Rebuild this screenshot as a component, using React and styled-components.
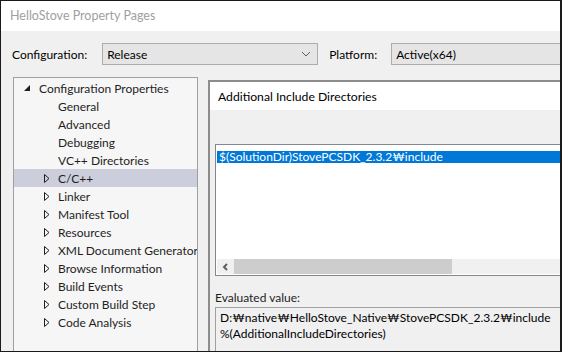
import React from 'react';
import styled, { createGlobalStyle } from 'styled-components';

const GlobalStyle = createGlobalStyle`
  html, body {
    margin: 0;
    padding: 0;
    background: #f0f0f0;
  }
  body {
    font-family: Lato, "Noto Sans CJK KR", sans-serif;
    font-size: 12px;
    color: #000;
  }
`;

const treeItems = [
  { label: 'General' },
  { label: 'Advanced' },
  { label: 'Debugging' },
  { label: 'VC++ Directories' },
  { label: 'C/C++', expandable: true, selected: true },
  { label: 'Linker', expandable: true },
  { label: 'Manifest Tool', expandable: true },
  { label: 'Resources', expandable: true },
  { label: 'XML Document Generator', expandable: true },
  { label: 'Browse Information', expandable: true },
  { label: 'Build Events', expandable: true },
  { label: 'Custom Build Step', expandable: true },
  { label: 'Code Analysis', expandable: true },
];

const ExpandedArrow = () => (
  <svg width="7" height="7" viewBox="0 0 7 7">
    <polygon points="6,0 6,6 0,6" fill="#1e1e1e" />
  </svg>
);

const CollapsedArrow = () => (
  <svg width="6" height="9" viewBox="0 0 6 9">
    <polygon points="0.5,0.5 5,4.5 0.5,8.5" fill="none" stroke="#1e1e1e" strokeWidth="1" />
  </svg>
);

const Chevron = () => (
  <svg width="10" height="6" viewBox="0 0 10 6">
    <polyline points="1,1 5,5 9,1" fill="none" stroke="#606060" strokeWidth="1" />
  </svg>
);

const LeftArrow = () => (
  <svg width="7" height="8" viewBox="0 0 7 8">
    <polyline points="5,1 2,4 5,7" fill="none" stroke="#606060" strokeWidth="2" />
  </svg>
);

const App = () => {
  return (
    <Window>
      <GlobalStyle />
      <TitleBar>HelloStove Property Pages</TitleBar>
      <Body>
        <ConfigRow>
          <FieldLabel before="0" after="15px">Configuration:</FieldLabel>
          <Combo width="216px">
            <span>Release</span>
            <Chevron />
          </Combo>
          <FieldLabel before="11px" after="14px">Platform:</FieldLabel>
          <Combo width="200px">
            <span>Active(x64)</span>
          </Combo>
        </ConfigRow>

        <Main>
          <Tree>
            <TreeRow indent="10px">
              <ArrowSlot width="15px"><ExpandedArrow /></ArrowSlot>
              Configuration Properties
            </TreeRow>
            {treeItems.map(item => (
              <TreeRow key={item.label} indent="30px" selected={item.selected}>
                <ArrowSlot width="14px">{item.expandable && <CollapsedArrow />}</ArrowSlot>
                {item.label}
              </TreeRow>
            ))}
          </Tree>

          <Editor>
            <EditorHeader>Additional Include Directories</EditorHeader>
            <EditorBody>
              <ListBox>
                <ListItem>$(SolutionDir)StovePCSDK_2.3.2₩include</ListItem>
                <ListSpacer />
                <HScroll>
                  <ScrollArrow><LeftArrow /></ScrollArrow>
                  <ScrollThumb />
                </HScroll>
              </ListBox>
              <SectionLabel>Evaluated value:</SectionLabel>
              <ValueBox>
                <div>D:₩native₩HelloStove_Native₩StovePCSDK_2.3.2₩include</div>
                <div>%(AdditionalIncludeDirectories)</div>
              </ValueBox>
            </EditorBody>
          </Editor>
        </Main>
      </Body>
    </Window>
  );
};

const Window = styled.div`
  width: 562px;
  height: 352px;
  box-sizing: border-box;
  border: 1px solid #1a1a1a;
  border-right-width: 2px;
  display: flex;
  flex-direction: column;
  overflow: hidden;
  background: #f0f0f0;
`;

const TitleBar = styled.div`
  height: 30px;
  flex-shrink: 0;
  background: #fff;
  color: #a0a0a0;
  font-size: 12.5px;
  line-height: 30px;
  padding-left: 9px;
`;

const Body = styled.div`
  flex: 1;
  display: flex;
  flex-direction: column;
  overflow: hidden;
`;

const ConfigRow = styled.div`
  display: flex;
  align-items: center;
  flex-shrink: 0;
  height: 22px;
  margin-top: 12px;
  padding-left: 11px;
`;

const FieldLabel = styled.div`
  flex-shrink: 0;
  font-size: 12px;
  margin-left: ${props => props.before};
  margin-right: ${props => props.after};
`;

const Combo = styled.div`
  width: ${props => props.width};
  height: 22px;
  box-sizing: border-box;
  flex-shrink: 0;
  display: flex;
  align-items: center;
  justify-content: space-between;
  padding: 0 6px 0 4px;
  background: #e5e5e5;
  border: 1px solid #adadad;
  font-size: 12px;
`;

const Main = styled.div`
  flex: 1;
  display: flex;
  margin-top: 12px;
  padding-left: 12px;
  overflow: hidden;
`;

const Tree = styled.div`
  width: 185px;
  flex-shrink: 0;
  box-sizing: border-box;
  border: 1px solid #a0a0a0;
  border-bottom: none;
  background: #f6f6f6;
  padding-top: 1px;
`;

const TreeRow = styled.div`
  height: 18px;
  display: flex;
  align-items: center;
  padding-left: ${props => props.indent};
  background: ${props => (props.selected ? '#cccedb' : 'transparent')};
  color: #1e1e1e;
  white-space: nowrap;
  overflow: hidden;
`;

const ArrowSlot = styled.span`
  width: ${props => props.width};
  flex-shrink: 0;
  display: flex;
  align-items: center;
`;

const Editor = styled.div`
  width: 360px;
  flex-shrink: 0;
  margin-left: 10px;
  margin-top: 3px;
  border-top: 2px solid #8c8c8c;
  border-left: 2px solid #8c8c8c;
  display: flex;
  flex-direction: column;
`;

const EditorHeader = styled.div`
  height: 28px;
  flex-shrink: 0;
  background: #fff;
  display: flex;
  align-items: center;
  padding-left: 8px;
  font-size: 12.2px;
`;

const EditorBody = styled.div`
  flex: 1;
  padding: 34px 0 0 5px;
  background: #f0f0f0;
`;

const ListBox = styled.div`
  height: 132px;
  box-sizing: border-box;
  border: 1px solid #828790;
  border-right: none;
  background: #fff;
  padding: 6px 0 0 1px;
  display: flex;
  flex-direction: column;
`;

const ListItem = styled.div`
  height: 12px;
  line-height: 12px;
  background: #0078d7;
  color: #fff;
  padding-left: 2px;
  font-size: 12px;
  white-space: nowrap;
`;

const ListSpacer = styled.div`
  flex: 1;
`;

const HScroll = styled.div`
  height: 15px;
  display: flex;
  align-items: center;
  background: #f0f0f0;
  margin-bottom: 1px;
`;

const ScrollArrow = styled.div`
  width: 17px;
  display: flex;
  justify-content: center;
`;

const ScrollThumb = styled.div`
  width: 218px;
  height: 15px;
  background: #cdcdcd;
`;

const SectionLabel = styled.div`
  margin-top: 14px;
  height: 17px;
  font-size: 12px;
  color: #1e1e1e;
`;

const ValueBox = styled.div`
  height: 60px;
  box-sizing: border-box;
  border: 1px solid #a0a0a0;
  border-right: none;
  background: #f0f0f0;
  padding: 2px 0 0 4px;
  font-size: 12px;
  line-height: 16px;
  white-space: nowrap;
`;

export default App;
